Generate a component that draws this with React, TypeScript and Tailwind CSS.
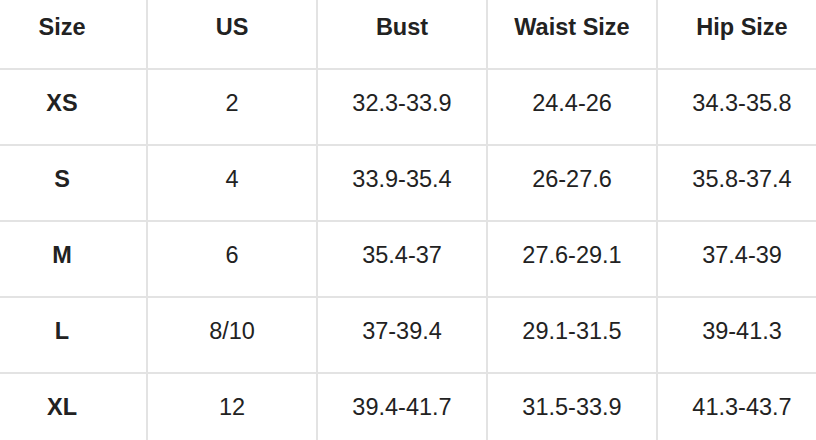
import React from 'react';

const headers = ['Size', 'US', 'Bust', 'Waist Size', 'Hip Size'];

const rows = [
  ['XS', '2', '32.3-33.9', '24.4-26', '34.3-35.8'],
  ['S', '4', '33.9-35.4', '26-27.6', '35.8-37.4'],
  ['M', '6', '35.4-37', '27.6-29.1', '37.4-39'],
  ['L', '8/10', '37-39.4', '29.1-31.5', '39-41.3'],
  ['XL', '12', '39.4-41.7', '31.5-33.9', '41.3-43.7'],
];

const cell =
  'h-[76px] border-r-2 border-b-2 border-[#e3e3e3] flex items-center justify-center pb-[6px] text-[23.5px] text-[#222]';

export default function App() {
  return (
    <div className="w-[816px] h-[440px] overflow-hidden bg-white font-['Liberation_Sans',Arial,sans-serif]">
      <div className="-ml-[22px] -mt-[6px] grid grid-cols-[repeat(5,170px)]">
        {headers.map((h) => (
          <div key={h} className={`${cell} font-bold`}>
            {h}
          </div>
        ))}
        {rows.map((r) =>
          r.map((v, i) => (
            <div key={r[0] + i} className={`${cell} ${i === 0 ? 'font-bold' : ''}`}>
              {v}
            </div>
          ))
        )}
      </div>
    </div>
  );
}
